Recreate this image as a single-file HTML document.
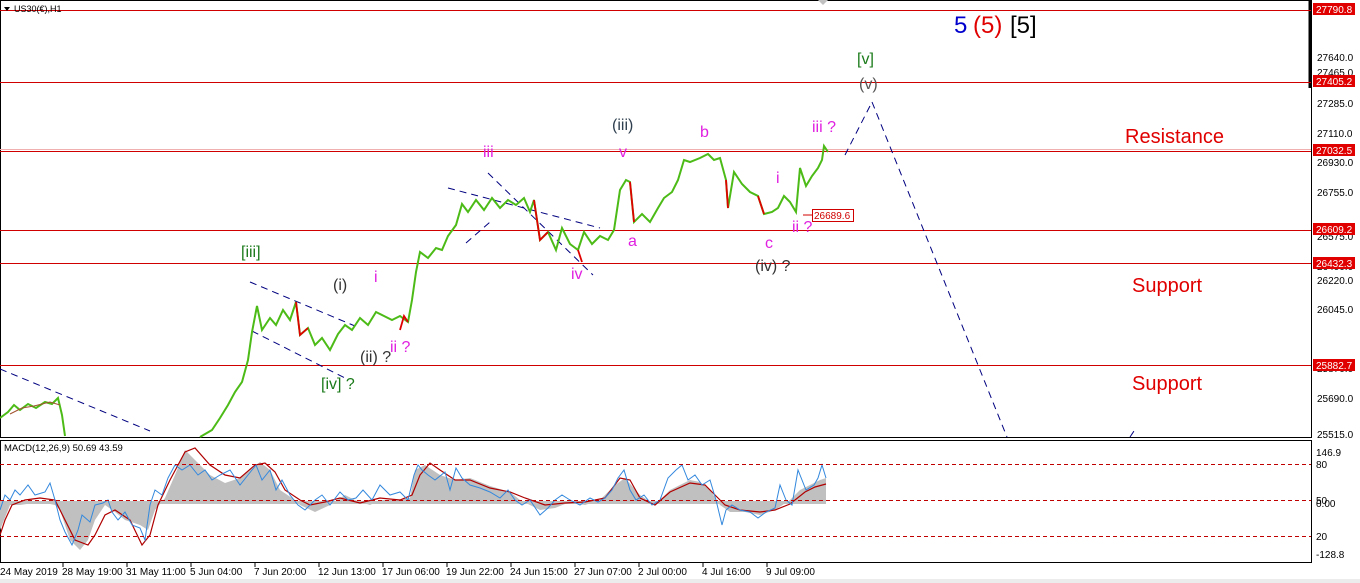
<!DOCTYPE html>
<html><head><meta charset="utf-8"><style>
html,body{margin:0;padding:0;background:#fff;}
svg{display:block;font-family:"Liberation Sans",sans-serif;}
</style></head><body>
<svg width="1360" height="583" viewBox="0 0 1360 583" xmlns="http://www.w3.org/2000/svg">
<rect width="1360" height="583" fill="#fff"/>
<rect x="0.5" y="0.5" width="1311" height="437" fill="none" stroke="#000"/>
<rect x="0.5" y="440.5" width="1311" height="122" fill="none" stroke="#000"/>
<rect x="0" y="579" width="1360" height="4" fill="#ececec"/>
<line x1="1310" y1="0" x2="1310" y2="88" stroke="#000" stroke-width="3"/>
<g stroke="#d00000" stroke-width="1">
<line x1="0" y1="10.5" x2="1311" y2="10.5"/>
<line x1="0" y1="82.5" x2="1311" y2="82.5"/>
<line x1="0" y1="151.5" x2="1311" y2="151.5"/>
<line x1="0" y1="230.5" x2="1311" y2="230.5"/>
<line x1="0" y1="263.5" x2="1311" y2="263.5"/>
<line x1="0" y1="365.5" x2="1311" y2="365.5"/>
</g>
<line x1="0" y1="149.5" x2="1311" y2="149.5" stroke="#f0b0b0"/>
<g font-size="10" fill="#000">
<text x="1317" y="61">27640.0</text>
<text x="1317" y="76">27465.0</text>
<text x="1317" y="107">27285.0</text>
<text x="1317" y="137">27110.0</text>
<text x="1317" y="166">26930.0</text>
<text x="1317" y="196">26755.0</text>
<text x="1317" y="240">26575.0</text>
<text x="1317" y="270">26400.0</text>
<text x="1317" y="284">26220.0</text>
<text x="1317" y="313">26045.0</text>
<text x="1317" y="372">25870.0</text>
<text x="1317" y="402">25690.0</text>
<text x="1317" y="438">25515.0</text>
<text x="1316" y="456">146.9</text>
<text x="1316" y="468">80</text>
<text x="1316" y="504">50</text>
<text x="1316" y="507">0.00</text>
<text x="1316" y="540">20</text>
<text x="1316" y="558">-128.8</text>
</g>
<g font-size="10" fill="#fff">
<rect x="1313" y="3" width="42" height="12" fill="#e00000"/><text x="1316" y="13">27790.8</text>
<rect x="1313" y="75" width="42" height="12" fill="#e00000"/><text x="1316" y="85">27405.2</text>
<rect x="1313" y="144" width="42" height="12" fill="#e00000"/><text x="1316" y="154">27032.5</text>
<rect x="1313" y="223" width="42" height="12" fill="#e00000"/><text x="1316" y="233">26609.2</text>
<rect x="1313" y="257" width="42" height="12" fill="#e00000"/><text x="1316" y="267">26432.3</text>
<rect x="1313" y="359" width="42" height="12" fill="#e00000"/><text x="1316" y="369">25882.7</text>
</g>
<path d="M4 7 L10 7 L7 11 Z" fill="#000"/>
<text x="14" y="12" font-size="9" fill="#000">US30(€),H1</text>
<g stroke="#000080" stroke-width="1" stroke-dasharray="7,5" fill="none">
<line x1="0" y1="369" x2="150" y2="431"/>
<line x1="250" y1="282" x2="355" y2="326"/>
<line x1="252" y1="331" x2="345" y2="378"/>
<line x1="448" y1="188" x2="600" y2="228"/>
<line x1="488" y1="173" x2="593" y2="275"/>
<line x1="466" y1="243" x2="490" y2="222"/>
<line x1="845" y1="155" x2="872" y2="102"/>
<line x1="872" y1="102" x2="1007" y2="437"/>
<line x1="1130" y1="437" x2="1136" y2="428"/>
</g>
<polyline fill="none" stroke="#4cbb17" stroke-width="2" points="0,418 8,412 14,405 20,410 28,404 36,408 45,402 52,404 58,398 62,415 65,436"/>
<polyline fill="none" stroke="#a0522d" stroke-width="1" points="10,414 22,408 34,406 50,402 60,405"/>
<polyline fill="none" stroke="#4cbb17" stroke-width="2" points="200,437 212,430 220,418 228,405 235,392 242,382 248,360 252,332 257,306 262,330 270,318 276,325 283,310 290,320 296,302 300,335 308,328 315,345 322,338 330,350 338,334 345,325 352,330 360,318 368,325 376,312 384,316 392,320 400,316 408,322 412,300 416,272 420,252 428,258 436,248 442,250 448,236 456,225 462,204 468,212 476,200 484,210 492,198 500,208 508,200 516,205 524,198 530,212 534,200 540,240 548,232 556,250 562,228 570,244 578,250 584,232 592,244 600,236 608,240 614,230 620,190 626,180 630,182 634,222 642,214 650,222 658,208 664,198 672,192 678,180 684,160 690,162 700,158 708,154 714,160 720,158 726,180 728,208 734,172 742,184 750,192 758,196 764,214 772,212 778,208 784,196 790,202 796,212 800,168 806,186 812,176 818,168 822,160 824,146 828,152"/>
<g stroke="#e00000" stroke-width="1.8" fill="none">
<polyline points="296,302 300,335 308,328"/>
<polyline points="534,200 540,240 548,232"/>
<polyline points="630,182 634,222"/>
<polyline points="726,180 728,208"/>
<polyline points="758,196 764,214"/>
<polyline points="408,322 404,316 400,330"/>
<polyline points="578,250 582,262"/>
</g>
<line x1="803" y1="215" x2="812" y2="215" stroke="#d00000"/>
<rect x="812.5" y="209.5" width="41" height="12" fill="#fff" stroke="#d00000"/>
<text x="814" y="219" font-size="10" fill="#d00000">26689.6</text>
<g font-size="16">
<text x="954" y="33" font-size="24" fill="#0000cc">5</text>
<text x="973" y="33" font-size="24" fill="#e00000">(5)</text>
<text x="1010" y="33" font-size="24" fill="#000">[5]</text>
<text x="857" y="64" fill="#1a7a1a">[v]</text>
<text x="859" y="89" fill="#555">(v)</text>
<text x="612" y="130" fill="#2f3f4f">(iii)</text>
<text x="700" y="137" fill="#e020e0">b</text>
<text x="812" y="132" fill="#e020e0">iii ?</text>
<text x="483" y="157" fill="#e020e0">iii</text>
<text x="619" y="157" fill="#e020e0">v</text>
<text x="776" y="183" fill="#e020e0">i</text>
<text x="792" y="232" fill="#e020e0">ii ?</text>
<text x="628" y="246" fill="#e020e0">a</text>
<text x="765" y="248" fill="#e020e0">c</text>
<text x="755" y="271" fill="#333">(iv) ?</text>
<text x="571" y="279" fill="#e020e0">iv</text>
<text x="241" y="257" fill="#1a7a1a">[iii]</text>
<text x="374" y="282" fill="#e020e0">i</text>
<text x="333" y="290" fill="#333">(i)</text>
<text x="390" y="352" fill="#e020e0">ii ?</text>
<text x="360" y="362" fill="#333">(ii) ?</text>
<text x="321" y="389" fill="#1a7a1a">[iv] ?</text>
<text x="1125" y="143" font-size="20" fill="#e00000">Resistance</text>
<text x="1132" y="292" font-size="20" fill="#e00000">Support</text>
<text x="1132" y="390" font-size="20" fill="#e00000">Support</text>
</g>
<polygon fill="#c0c0c0" points="0,502 0,530 10,505 20,505 40,502 55,505 60,510 70,540 80,550 88,540 95,520 105,505 115,512 125,520 140,525 148,530 155,510 165,498 175,475 185,450 195,460 210,475 225,483 240,478 250,470 260,462 270,470 280,490 295,500 300,505 315,512 330,505 345,495 355,500 370,505 380,500 395,500 410,498 415,470 425,465 440,475 455,480 470,478 490,486 510,492 520,500 540,510 555,508 570,502 585,505 600,500 615,485 625,478 640,495 655,505 670,490 690,480 700,482 710,490 720,505 730,512 745,512 760,515 775,510 790,500 800,490 810,485 820,480 826,478 826,502"/>
<line x1="0" y1="502.5" x2="826" y2="502.5" stroke="#c0c0c0" stroke-width="3"/>
<polyline fill="none" stroke="#b00000" stroke-width="1.2" points="0,535 5,520 12,505 25,500 40,498 55,500 65,520 75,540 88,545 95,535 105,515 115,510 130,520 142,545 150,535 158,505 170,480 185,452 195,448 210,465 225,475 240,478 255,465 265,463 275,472 285,490 300,500 310,505 325,502 340,498 360,503 380,498 400,500 412,495 420,475 430,463 440,470 455,480 470,480 490,488 510,492 525,498 545,505 565,503 585,502 605,498 620,478 630,480 640,498 655,505 670,492 690,483 705,485 715,495 725,505 740,510 760,512 775,510 790,504 805,492 815,487 826,484"/>
<polyline fill="none" stroke="#3388dd" stroke-width="1" points="0,510 5,495 10,500 15,490 20,495 28,485 35,495 45,492 50,483 55,500 60,520 65,532 72,545 78,530 82,515 90,522 95,505 103,503 108,500 112,512 118,520 125,512 132,525 140,528 145,540 150,505 155,490 162,495 168,478 175,465 182,470 190,465 198,475 205,470 212,480 220,475 230,470 240,485 248,475 256,465 262,480 270,470 276,490 282,480 290,495 298,505 305,510 315,500 322,495 330,505 340,492 348,500 356,498 363,490 372,500 380,485 390,495 400,492 408,500 414,475 418,465 422,470 428,475 435,480 445,472 450,490 456,468 462,478 470,485 480,488 490,492 500,498 508,490 515,500 522,505 530,500 540,515 548,508 555,500 562,495 570,500 580,505 590,498 598,502 605,498 612,490 618,478 624,470 630,490 636,500 644,495 652,505 660,500 668,478 676,470 682,465 688,480 695,475 702,485 710,480 716,500 722,525 726,510 732,505 740,510 750,512 758,518 766,512 775,508 780,485 786,500 792,505 798,470 806,490 814,485 818,478 822,465 826,478"/>
<g stroke="#c00000" stroke-dasharray="4,3">
<line x1="0" y1="464.5" x2="1311" y2="464.5"/>
<line x1="0" y1="500.5" x2="1311" y2="500.5"/>
<line x1="0" y1="536.5" x2="1311" y2="536.5"/>
</g>
<text x="4" y="451" font-size="9.5" fill="#000">MACD(12,26,9) 50.69 43.59</text>
<g font-size="10" fill="#000">
<text x="0" y="575">24 May 2019</text>
<text x="62" y="575">28 May 19:00</text>
<text x="126" y="575">31 May 11:00</text>
<text x="190" y="575">5 Jun 04:00</text>
<text x="254" y="575">7 Jun 20:00</text>
<text x="318" y="575">12 Jun 13:00</text>
<text x="382" y="575">17 Jun 06:00</text>
<text x="446" y="575">19 Jun 22:00</text>
<text x="510" y="575">24 Jun 15:00</text>
<text x="574" y="575">27 Jun 07:00</text>
<text x="638" y="575">2 Jul 00:00</text>
<text x="702" y="575">4 Jul 16:00</text>
<text x="766" y="575">9 Jul 09:00</text>
</g>
<g stroke="#000">
<line x1="63" y1="563" x2="63" y2="567"/><line x1="127" y1="563" x2="127" y2="567"/><line x1="191" y1="563" x2="191" y2="567"/><line x1="255" y1="563" x2="255" y2="567"/><line x1="319" y1="563" x2="319" y2="567"/><line x1="383" y1="563" x2="383" y2="567"/><line x1="447" y1="563" x2="447" y2="567"/><line x1="511" y1="563" x2="511" y2="567"/><line x1="575" y1="563" x2="575" y2="567"/><line x1="639" y1="563" x2="639" y2="567"/><line x1="703" y1="563" x2="703" y2="567"/><line x1="767" y1="563" x2="767" y2="567"/>
</g>
<path d="M818 0 L828 0 L823 5 Z" fill="#c0c0c0"/>
</svg>
</body></html>
